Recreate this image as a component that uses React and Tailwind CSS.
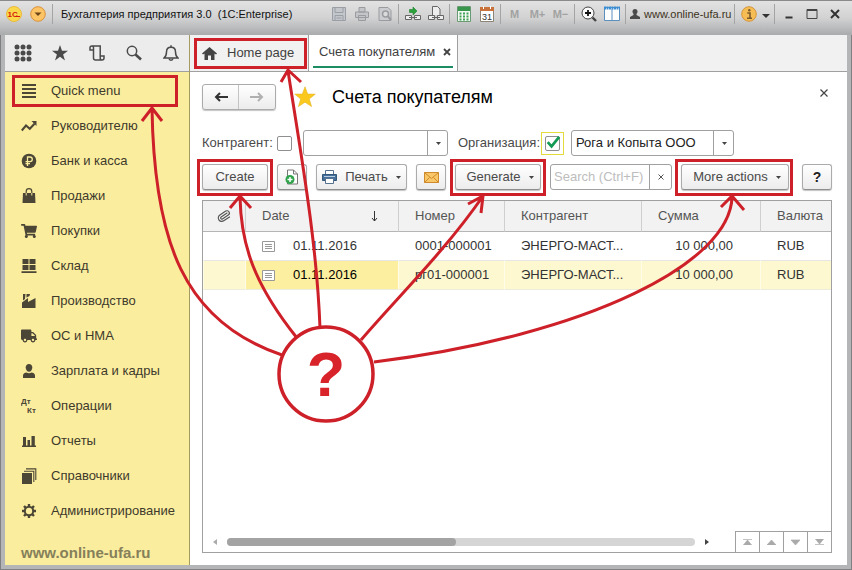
import { useState } from "react";
import { FaTruck, FaShoppingCart } from "react-icons/fa";
import { Paperclip } from "lucide-react";

const ICON = "w-4 h-4 shrink-0";

// Sidebar icons
const BarsIcon = () => (
  <svg className={ICON} viewBox="0 0 16 16" stroke="currentColor" strokeWidth="2">
    <path d="M1 2h14M1 6h14M1 10h14M1 14h14" />
  </svg>
);

const TrendIcon = () => (
  <svg className={ICON} viewBox="0 0 16 16" fill="none" stroke="currentColor" strokeWidth="2">
    <path d="M.8 12.5 5 7.5l3.8 3.3 4.7-5" />
    <path d="M10.5 3H15.500v5z" fill="currentColor" stroke="none" />
  </svg>
);

const RubleIcon = () => (
  <svg className={ICON} viewBox="0 0 16 16">
    <circle cx="8" cy="8" r="7.300" fill="currentColor" />
    <path d="M6.500 13V4h2.500a2.300 2.300 0 0 1 0 4.600H4.500M4.500 10.700h4.500" fill="none" stroke="#fbed9e" strokeWidth="1.300" />
  </svg>
);

const BagIcon = () => (
  <svg className={ICON} viewBox="0 0 16 16">
    <path d="M2 5h12l.5 10h-13z" fill="currentColor" />
    <path d="M5.200 8V3.500a2.800 2.800 0 0 1 5.600 0V8" fill="none" stroke="currentColor" strokeWidth="1.200" />
    <path d="M5.200 5v2.500M10.800 5v2.500" stroke="#fbed9e" strokeWidth="1" />
  </svg>
);

const StockIcon = () => (
  <svg className={ICON} viewBox="0 0 16 16" fill="currentColor">
    <path d="M1.500 1h6v5h-6zM8.500 1h6v5h-6zM1.500 7h6v5h-6zM8.500 7h6v5h-6zM.5 13.300h15V15H.5z" />
  </svg>
);

const FactoryIcon = () => (
  <svg className={ICON} viewBox="0 0 16 16" fill="currentColor">
    <path d="M1 15V9.500L7 5v4l7.500-4v10z" />
    <path d="M2 1h2.500L4 6 2 7.500zM5.500 1H9L8.500 3 5.500 4.500z" />
  </svg>
);

const PersonIcon = () => (
  <svg className={ICON} viewBox="0 0 16 16" fill="currentColor">
    <path d="M8 1c2 0 3.300 1.400 3.300 3.500S9.800 8.800 8 8.800 4.700 6.600 4.700 4.500 6 1 8 1z" />
    <path d="M2 15v-2.500C2 10.500 4 9.800 5.500 9.500 7 10.500 9 10.500 10.500 9.500 12 9.800 14 10.500 14 12.500V15z" />
  </svg>
);

const DebitIcon = () => (
  <svg className={ICON} viewBox="0 0 16 16" fill="currentColor" fontSize="8" fontWeight="bold">
    <text x="0" y="6">Дт</text>
    <text x="6" y="15">Кт</text>
  </svg>
);

const ReportsIcon = () => (
  <svg className={ICON} viewBox="0 0 16 16" fill="currentColor">
    <path d="M1 12.500h14V14H1zM2 4h3v9H2zM6.500 7h2.500v6H6.500zM10.500 3h3.300v10h-3.300z" />
  </svg>
);

const BooksIcon = () => (
  <svg className={ICON} viewBox="0 0 16 16">
    <path d="M1 5h10v11H1z" fill="currentColor" />
    <path d="M3 3.200h9.800V14M5 .9h9.800V12" fill="none" stroke="currentColor" strokeWidth="1.100" />
  </svg>
);

const GearIcon = () => (
  <svg className={ICON} viewBox="0 0 16 16" fill="none" stroke="currentColor">
    <circle cx="8" cy="8" r="4.200" strokeWidth="2" />
    <path
      d="M8 1v2.500M8 12.500V15M1 8h2.500M12.500 8H15M3 3l1.800 1.800M11.200 11.200 13 13M13 3l-1.800 1.800M4.800 11.200 3 13"
      strokeWidth="2.400"
    />
  </svg>
);

const sections = [
  { label: "Quick menu", icon: <BarsIcon /> },
  { label: "Руководителю", icon: <TrendIcon /> },
  { label: "Банк и касса", icon: <RubleIcon /> },
  { label: "Продажи", icon: <BagIcon /> },
  { label: "Покупки", icon: <FaShoppingCart className={ICON} /> },
  { label: "Склад", icon: <StockIcon /> },
  { label: "Производство", icon: <FactoryIcon /> },
  { label: "ОС и НМА", icon: <FaTruck className={ICON} /> },
  { label: "Зарплата и кадры", icon: <PersonIcon /> },
  { label: "Операции", icon: <DebitIcon /> },
  { label: "Отчеты", icon: <ReportsIcon /> },
  { label: "Справочники", icon: <BooksIcon /> },
  { label: "Администрирование", icon: <GearIcon /> },
];

const invoices = [
  { date: "01.11.2016", number: "0001-000001", partner: "ЭНЕРГО-МАСТ...", sum: "10 000,00", currency: "RUB" },
  { date: "01.11.2016", number: "рг01-000001", partner: "ЭНЕРГО-МАСТ...", sum: "10 000,00", currency: "RUB" },
];

function Caret() {
  return (
    <svg className="w-[5px] h-[3px] shrink-0" viewBox="0 0 5 3" fill="#444">
      <path d="M0 0h5L2.500 3z" />
    </svg>
  );
}

function TitleButton({ label, children }) {
  return (
    <button aria-label={label} className="w-[23px] h-6 flex items-center justify-center shrink-0">
      {children}
    </button>
  );
}

function Divider() {
  return <span className="w-px h-5 mx-0.5 bg-[#a4a4a4] shrink-0" />;
}

function TitleBar() {
  return (
    <header className="h-[35px] pb-2 pl-1.5 pr-1.5 flex items-center bg-linear-to-b from-[#e2e2e2] via-[#d2d2d3] to-[#a9abac] border-t border-[#8a8a8c] text-[11px] text-[#111]">
      <svg className="w-4 h-4 shrink-0" viewBox="0 0 16 16">
        <circle cx="8" cy="8" r="7.500" fill="#fbd84a" stroke="#e9b93e" />
        <text x="1.500" y="11" fontSize="8" fontWeight="bold" fill="#d4200c">1C</text>
        <path d="M9 10.500h5" stroke="#d4200c" />
      </svg>
      <button aria-label="Main menu" className="ml-2 shrink-0">
        <svg className="w-4 h-4" viewBox="0 0 16 16">
          <circle cx="8" cy="8" r="7.300" fill="#fcc465" stroke="#d9913a" />
          <path d="M4.500 6.500h7L8 10z" fill="#6b4517" />
        </svg>
      </button>
      <span className="w-px h-5 mx-1.5 bg-[#a4a4a4] shrink-0" />
      <h1 className="pl-0.5 whitespace-nowrap">Бухгалтерия предприятия 3.0 &nbsp;(1C:Enterprise)</h1>
      <div className="ml-auto flex items-center">
        <TitleButton label="Save">
          <svg className="w-3.5 h-3.5" viewBox="0 0 14 14" fill="#c3c6cb" stroke="#9a9ea5">
            <path d="M.5.5h13v13H.5zM3 .5h8v5H3zM3 8.500h8v5H3z" />
            <path d="M4.500 11h5" />
          </svg>
        </TitleButton>
        <TitleButton label="Print">
          <svg className="w-3.5 h-3.5" viewBox="0 0 14 14" fill="#c3c5c8" stroke="#999b9f">
            <path d="M4 .5h6V5H4zM.5 5h13v5.500H.5zM3.500 8.500h7v5h-7z" />
          </svg>
        </TitleButton>
        <TitleButton label="Preview">
          <svg className="w-3.5 h-3.5" viewBox="0 0 14 14" fill="#cbcccf" stroke="#999b9f">
            <path d="M1 .5h9l3 3v10H1z" />
            <circle cx="7.500" cy="7" r="3" fill="#d9dadc" strokeWidth="1.500" />
            <path d="m10 9.500 3 3.500" strokeWidth="2" />
          </svg>
        </TitleButton>
        <Divider />
        <TitleButton label="Get link">
          <svg className="w-4 h-4" viewBox="0 0 16 16" fill="#eee" stroke="#666">
            <path d="M.5 9.500h6v4h-6zM9.500 9.500h6v4h-6z" />
            <path d="M4 11.500h8" />
            <path d="M4.500 3.500H8V1l4 4-4 4V6.500H4.500z" fill="#2ca13b" stroke="#1d7f2b" strokeWidth=".6" />
          </svg>
        </TitleButton>
        <TitleButton label="Go to link">
          <svg className="w-4 h-4" viewBox="0 0 16 16" fill="#eee" stroke="#666">
            <path d="M4.500 9V.5h5l2.500 2.500v6" />
            <path d="M.5 9.500h6v4h-6zM9.500 9.500h6v4h-6z" />
            <path d="M4 11.500h8" />
          </svg>
        </TitleButton>
        <Divider />
        <TitleButton label="Calculator">
          <svg className="w-3.5 h-4" viewBox="0 0 14 16">
            <path d="M.5.5h13v15H.5z" fill="#f4fbf4" stroke="#6a9a72" />
            <path d="M1 1h12v4H1z" fill="#37964b" />
            <path d="M2.500 7.500h9M2.500 10.500h9M2.500 13.500h9" stroke="#43a058" strokeWidth="2" strokeDasharray="2 1.500" />
          </svg>
        </TitleButton>
        <TitleButton label="Calendar">
          <svg className="w-3.5 h-4" viewBox="0 0 14 16">
            <path d="M.5 1.500h13v14H.5z" fill="#fff" stroke="#8d8478" />
            <path d="M0 1h14v4H0z" fill="#c9713a" />
            <path d="M3.500 0v3M10.500 0v3" stroke="#fff" />
            <text x="2" y="13.500" fontSize="9" fill="#333">31</text>
          </svg>
        </TitleButton>
        <Divider />
        {["M", "M+", "M−"].map((m) => (
          <button key={m} className="w-[23px] h-6 text-[11px] font-bold text-[#a2a2a2]">
            {m}
          </button>
        ))}
        <Divider />
        <TitleButton label="Zoom">
          <svg className="w-4 h-4" viewBox="0 0 16 16" fill="none" stroke="#444">
            <circle cx="7" cy="7" r="6" fill="#fafafa" />
            <path d="M7 4v6M4 7h6" stroke="#111" strokeWidth="1.800" />
            <path d="m11.500 11.500 3.500 3.500" strokeWidth="2.400" />
          </svg>
        </TitleButton>
        <TitleButton label="Panels">
          <svg className="w-4 h-4" viewBox="0 0 16 16">
            <path d="M.5 1.500h15v13H.5zM8 3v11" fill="#fff" stroke="#5b8fbe" />
            <path d="M0 2h16" stroke="#3c8ed4" strokeWidth="3" strokeDasharray="2 .5" />
          </svg>
        </TitleButton>
        <Divider />
        <a href="#user" className="w-[104px] pl-0.5 flex items-center gap-1 text-[11px] text-[#3c3320] whitespace-nowrap">
          <svg className="w-2.5 h-2.5 shrink-0" viewBox="0 0 10 10" fill="#4b4b4b">
            <circle cx="5" cy="2.500" r="2.500" />
            <path d="M3.500 4h3v2L10 8v2H0V8l3.500-2z" />
          </svg>
          www.online-ufa.ru
        </a>
        <Divider />
        <TitleButton label="Information">
          <svg className="w-4 h-4" viewBox="0 0 16 16">
            <circle cx="8" cy="8" r="7.300" fill="#f7bd55" stroke="#d4953a" />
            <path d="M6.300 7H9v5M6 12.300h5" fill="none" stroke="#7b5a2c" strokeWidth="1.600" />
            <circle cx="8.300" cy="4.300" r="1.200" fill="#7b5a2c" />
          </svg>
        </TitleButton>
        <button aria-label="More" className="w-3 h-6 pt-1 flex items-center justify-center">
          <svg className="w-2 h-1" viewBox="0 0 8 4" fill="#333">
            <path d="M0 0h8L4 4z" />
          </svg>
        </button>
        <Divider />
        <TitleButton label="Minimize">
          <svg className="w-3 h-3" viewBox="0 0 12 12">
            <path d="M2.500 9.500h7" stroke="#333" strokeWidth="2" />
          </svg>
        </TitleButton>
        <TitleButton label="Maximize">
          <svg className="w-3 h-3" viewBox="0 0 12 12" fill="none" stroke="#444">
            <path d="M1 1.500h10v9H1zM1 2.500h10" />
          </svg>
        </TitleButton>
        <TitleButton label="Close">
          <svg className="w-3 h-3" viewBox="0 0 12 12" stroke="#333" strokeWidth="2">
            <path d="m2 2 8 8M10 2l-8 8" />
          </svg>
        </TitleButton>
      </div>
    </header>
  );
}

function ToolPanel() {
  return (
    <div className="h-[37px] grid grid-cols-5 place-items-center bg-[#ececec] border-b border-[#a0a0a0] text-[#4a4a4a]">
      <button aria-label="Sections">
        <svg className="w-[18px] h-[18px]" viewBox="0 0 18 18" fill="currentColor">
          {[3, 9, 15].map((y) => [3, 9, 15].map((x) => <circle key={`${x}-${y}`} cx={x} cy={y} r="2.500" />))}
        </svg>
      </button>
      <button aria-label="Favorites">
        <svg className="w-4 h-4" viewBox="0 0 16 16" fill="currentColor">
          <path d="m8 0 2 5.800h6l-4.900 3.600 1.900 6L8 11.800 3 15.400l1.900-6L0 5.800h6z" />
        </svg>
      </button>
      <button aria-label="History">
        <svg className="w-4 h-4" viewBox="0 0 16 16" fill="none" stroke="currentColor" strokeWidth="1.500">
          <path d="M4.500 5H1V2.800C1 1.500 1.800 1 2.800 1h8.400v10.500M4.500 12V2.500C4.500 1.500 3.800 1 2.800 1M11.200 11H15v2c0 1.300-.8 2-2 2H6.500c-1.300 0-2-.8-2-2v-2M11.200 11v2c0 1.200.6 2 1.800 2" />
        </svg>
      </button>
      <button aria-label="Search">
        <svg className="w-4 h-4" viewBox="0 0 16 16" fill="none" stroke="currentColor">
          <circle cx="6" cy="6" r="4.700" strokeWidth="1.500" />
          <path d="m9.500 9.500 5.500 5" strokeWidth="2.600" />
        </svg>
      </button>
      <button aria-label="Notifications">
        <svg className="w-4 h-4" viewBox="0 0 16 16" fill="none" stroke="currentColor" strokeWidth="1.500">
          <path d="M1 13c2-1.500 2.500-3 2.500-6 0-3 2-4.700 4.500-4.700S12.500 4 12.500 7c0 3 .5 4.500 2.500 6z" />
          <path d="M8 2.300V.3M6 13.500c.3 2.200 3.700 2.200 4 0" />
        </svg>
      </button>
    </div>
  );
}

function Sidebar() {
  return (
    <aside className="w-[185px] shrink-0 flex flex-col border-r border-[#a39b62] bg-[#fbed9e]">
      <ToolPanel />
      <nav className="pt-px text-[13px] text-[#3e3a2c]">
        {sections.map((s) => (
          <a key={s.label} href="#section" className="h-[35px] pl-4 flex items-center gap-3.5 whitespace-nowrap">
            <span className="text-[#4b4636]">{s.icon}</span>
            {s.label}
          </a>
        ))}
      </nav>
      <p className="mt-auto pl-4 text-[15px] leading-6 font-bold text-[#85805a]">www.online-ufa.ru</p>
    </aside>
  );
}

function Tabs() {
  return (
    <div className="h-[37px] flex bg-[#f1f1f1] border-b border-[#a0a0a0] text-[13px] text-[#3f3f3f]">
      <button className="w-[119px] pl-3 flex items-center gap-2.5 border-r border-[#a0a0a0]">
        <svg className="w-[15px] h-[13px]" viewBox="0 0 15 13" fill="#444">
          <path d="M7.500 0 0 6.500l1 1L2.500 6.500V13H6V8.500h3V13h3.500V6.500L14 7.500l1-1z" />
        </svg>
        Home page
      </button>
      <div className="px-1 bg-white border-r border-[#a0a0a0] flex flex-col">
        <div className="flex-1 pl-1.5 pr-0.5 pt-0.5 flex items-center gap-2 border-b-2 border-[#1c8c62]">
          <button className="whitespace-nowrap">Счета покупателям</button>
          <button aria-label="Close tab">
            <svg className="w-2 h-2" viewBox="0 0 8 8" stroke="#444" strokeWidth="1.800">
              <path d="m1 1 6 6M7 1 1 7" />
            </svg>
          </button>
        </div>
        <span className="h-[3px]" />
      </div>
    </div>
  );
}

const BUTTON =
  "h-[26px] flex items-center justify-center shrink-0 whitespace-nowrap rounded-[3px] border border-[#ababab] border-b-[#8d8d8d] bg-linear-to-b from-white to-[#ececec] shadow-[0_1px_1px_#c4c4c4]";

function Combo({ id, options, className }) {
  return (
    <div className={`relative h-[26px] ${className}`}>
      <select
        id={id}
        className="w-full h-full pl-1 pr-6 appearance-none rounded-[3px] border border-[#a0a0a0] bg-white text-[13px] text-[#222]"
      >
        {options.map((o) => (
          <option key={o}>{o}</option>
        ))}
      </select>
      <span className="absolute right-0 inset-y-0 w-[21px] flex items-center justify-center border-l border-[#a0a0a0] pointer-events-none">
        <Caret />
      </span>
    </div>
  );
}

function Filters() {
  const [byOrg, setByOrg] = useState(true);

  return (
    <div className="mt-5 flex items-center">
      <label htmlFor="use-partner" className="w-[75px] whitespace-nowrap">Контрагент:</label>
      <input id="use-partner" type="checkbox" className="w-[15px] h-[15px] shrink-0 appearance-none rounded-[2px] border border-[#8f8f8f] bg-white" />
      <Combo id="partner" options={[""]} className="w-[145px] ml-[11px]" />
      <label htmlFor="use-org" className="w-[83px] ml-2.5 whitespace-nowrap">Организация:</label>
      <span className="relative w-[23px] h-[23px] shrink-0 flex items-center justify-center border border-[#e3da3c]">
        <input
          id="use-org"
          type="checkbox"
          checked={byOrg}
          onChange={(e) => setByOrg(e.target.checked)}
          className="w-[15px] h-[15px] appearance-none rounded-[2px] border border-[#8f8f8f] bg-white"
        />
        {byOrg && (
          <svg className="absolute inset-0 w-full h-full pointer-events-none" viewBox="0 0 22 22" fill="none" stroke="#139a55" strokeWidth="2.800">
            <path d="m6 9.500 4 4.500L18 4" />
          </svg>
        )}
      </span>
      <Combo id="organization" options={["Рога и Копыта ООО"]} className="w-[163px] ml-[7px]" />
    </div>
  );
}

function CommandBar() {
  return (
    <div className="mt-2 flex items-center gap-[9px]">
      <button className={`${BUTTON} w-[66px]`}>Create</button>
      <button aria-label="Copy" className={`${BUTTON} w-[30px]`}>
        <svg className="w-4 h-4" viewBox="0 0 16 16" fill="none">
          <path d="M3.500 1h6l4 4v10h-10z" fill="#fff" stroke="#777" />
          <path d="M9.500 1v4h4" stroke="#777" />
          <circle cx="6" cy="10.500" r="4.500" fill="#2fa24c" />
          <path d="M6 8v5M3.500 10.500h5" stroke="#fff" strokeWidth="1.500" />
        </svg>
      </button>
      <button className={`${BUTTON} w-[91px] gap-2`}>
        <svg className="w-[15px] h-[14px]" viewBox="0 0 15 14">
          <path d="M3.500.5h8V5h-8z" fill="#fff" stroke="#55718f" />
          <path d="M.5 4.500h14v6H.5z" fill="#456f9b" stroke="#34577c" />
          <path d="M3.500 8.500h8v5h-8z" fill="#fff" stroke="#55718f" />
          <path d="M2 6.500h11" stroke="#b7cbe0" />
        </svg>
        Печать
        <Caret />
      </button>
      <button aria-label="Send by email" className={`${BUTTON} w-[30px]`}>
        <svg className="w-[15px] h-[11px]" viewBox="0 0 15 11" stroke="#cf8a2c">
          <path d="M.5.5h14v10H.5z" fill="#f9c768" />
          <path d="m.5.500 7 6 7-6M.5 10.500l5-5M14.500 10.500l-5-5" fill="none" />
        </svg>
      </button>
      <button className={`${BUTTON} w-[86px] pl-1 gap-2`}>
        Generate
        <Caret />
      </button>
      <div className="w-[122px] h-[26px] shrink-0 flex rounded-[3px] border border-[#a0a0a0] bg-white">
        <input aria-label="Search" placeholder="Search (Ctrl+F)" className="flex-1 min-w-0 pl-[3px] outline-none placeholder-[#bdbdbd]" />
        <button aria-label="Clear" className="w-[22px] flex items-center justify-center border-l border-[#a0a0a0]">
          <svg className="w-1.5 h-1.5" viewBox="0 0 6 6" stroke="#555">
            <path d="m.5.500 5 5M5.500.500l-5 5" />
          </svg>
        </button>
      </div>
      <button className={`${BUTTON} w-[108px] pl-1 gap-2`}>
        More actions
        <Caret />
      </button>
      <button className={`${BUTTON} w-[30px] ml-auto font-bold text-sm text-[#222]`}>?</button>
    </div>
  );
}

function InvoiceTable() {
  const head = "h-[31px] pl-4 font-normal text-left border-l border-[#cfcfcf]";
  const cell = "h-[29px] pl-4 border-l";

  return (
    <div className="mt-2.5 flex-1 flex flex-col border border-[#a0a0a0] bg-white">
      <table className="w-full table-fixed border-separate border-spacing-0">
        <colgroup>
          <col className="w-[42px]" />
          <col className="w-[153px]" />
          <col className="w-[106px]" />
          <col className="w-[137px]" />
          <col className="w-[119px]" />
          <col />
        </colgroup>
        <thead className="bg-[#f2f2f2] text-[#555]">
          <tr>
            <th className="h-[31px] border-b border-[#b5b5b5]">
              <Paperclip aria-label="Attachments" className="w-3.5 h-3.5 mx-auto rotate-12" strokeWidth={2} />
            </th>
            <th className={`${head} border-b border-b-[#b5b5b5]`}>
              <span className="pr-5 flex items-center justify-between">
                Date
                <svg className="w-[7px] h-[11px]" viewBox="0 0 7 11" fill="none" stroke="#333">
                  <path d="M3.500 0v10M1 7l2.500 3L6 7" />
                </svg>
              </span>
            </th>
            {["Номер", "Контрагент", "Сумма", "Валюта"].map((h) => (
              <th key={h} className={`${head} border-b border-b-[#b5b5b5]`}>{h}</th>
            ))}
          </tr>
        </thead>
        <tbody className="text-[#333]">
          {invoices.map((row, i) => {
            const selected = i === 1;
            const tone = selected
              ? "bg-[#fdf8cf] border-l-[#fffce8] border-b border-b-[#ececdc]"
              : "border-l-transparent border-b border-b-[#e6e6e6]";
            return (
              <tr key={row.number}>
                <td className={`${cell} ${tone}`}></td>
                <td className={`${cell} ${selected ? "bg-[#fcef9f] text-black border-l-[#fffce8] border-b border-b-[#ececdc]" : tone}`}>
                  <span className="flex items-center gap-[18px]">
                    <svg className="w-[13px] h-[11px] shrink-0" viewBox="0 0 13 11" fill="none" stroke="#999">
                      <path d="M.5.500h12v10H.5z" fill="#fff" />
                      <path d="M3 3.500h7M3 5.500h7M3 7.500h7" />
                    </svg>
                    {row.date}
                  </span>
                </td>
                <td className={`${cell} ${tone}`}>{row.number}</td>
                <td className={`${cell} ${tone} whitespace-nowrap`}>{row.partner}</td>
                <td className={`${cell} ${tone} pr-[27px] text-right whitespace-nowrap`}>{row.sum}</td>
                <td className={`${cell} ${tone}`}>{row.currency}</td>
              </tr>
            );
          })}
        </tbody>
      </table>

      {/* Horizontal scroll and paging */}
      <div className="mt-auto flex items-center">
        <svg className="w-1 h-1.5 ml-2.5" viewBox="0 0 4 6" fill="#aaa">
          <path d="M4 0v6L0 3z" />
        </svg>
        <div className="flex-1 h-2 ml-2.5 mr-2.5 rounded-full bg-[#d5d5d5]">
          <div className="w-[49%] h-full rounded-full bg-[#a3a3a3]" />
        </div>
        <svg className="w-1 h-1.5 mr-[26px]" viewBox="0 0 4 6" fill="#444">
          <path d="M0 0v6l4-3z" />
        </svg>
        <div className="flex border-t border-[#a0a0a0]">
          {[
            ["First", "M0 .5h9M4.500 1 8.500 6h-8z"],
            ["Previous", "M4.500 1 9 6H0z"],
            ["Next", "M0 1h9L4.500 6z"],
            ["Last", "M.5 0h8l-4 5zM0 5.500h9"],
          ].map(([label, d]) => (
            <button key={label} aria-label={label} className="w-6 h-5 flex items-center justify-center border-l border-[#a0a0a0]">
              <svg className="w-[9px] h-1.5" viewBox="0 0 9 6" fill="#a9a9a9" stroke="#a9a9a9" strokeWidth=".7">
                <path d={d} />
              </svg>
            </button>
          ))}
        </div>
      </div>
    </div>
  );
}

// Red frames and arrows drawn over the window
function Annotations() {
  return (
    <svg className="absolute left-0 top-0 w-[852px] h-[570px] pointer-events-none" viewBox="0 0 852 570" fill="none" stroke="#ce2029" strokeWidth="3">
      <rect x="13.500" y="76.500" width="163" height="29" />
      <rect x="195.500" y="39.500" width="110" height="28" />
      <rect x="198.500" y="160.500" width="73" height="34" />
      <rect x="451.500" y="160.500" width="93" height="34" />
      <rect x="676.500" y="160.500" width="115" height="34" />
      <path d="M152 108C154 242 184 322 282 355M142 121l10-13 10 13" />
      <path d="M240 197C241 245 254 284 297 338M230 208l10-12 11 12" />
      <path d="M288 71C302 160 317 245 320 328M281 82l7-12 13 12" />
      <path d="M483 196C446 250 395 300 361 340M468 204l15-8-2 17" />
      <path d="M732 196C732 262 590 335 374 362M721 207l11-11 12 14" />
      <circle cx="326" cy="374" r="47" fill="#fff" strokeWidth="3.500" />
      <text x="326" y="396" textAnchor="middle" fontSize="63" fontWeight="bold" fill="#d8232a" stroke="none">?</text>
    </svg>
  );
}

export default function App() {
  return (
    <div className="relative min-h-screen flex flex-col bg-[#b3b5b6] shadow-[inset_0_0_0_1px_#808083] font-['Liberation_Sans',Arial,sans-serif]">
      <TitleBar />
      <div className="flex-1 flex mx-[5px] mb-[5px]">
        <Sidebar />
        <main className="flex-1 min-w-0 flex flex-col bg-white">
          <Tabs />
          <section className="flex-1 flex flex-col pl-3 pr-[15px] pt-3 pb-3 text-[13px] text-[#4a4a4a]">
            <div className="flex items-center">
              <div className="w-[74px] h-[26px] grid grid-cols-2 rounded-[3px] border border-[#ababab] bg-linear-to-b from-white to-[#ececec] shadow-[0_1px_1px_#c4c4c4]">
                <button aria-label="Back" className="flex items-center justify-center border-r border-[#c4c4c4]">
                  <svg className="w-3.5 h-2.5" viewBox="0 0 14 10" fill="none" stroke="#333" strokeWidth="2">
                    <path d="M14 5H2M6 1 2 5l4 4" />
                  </svg>
                </button>
                <button aria-label="Forward" className="flex items-center justify-center">
                  <svg className="w-3.5 h-2.5" viewBox="0 0 14 10" fill="none" stroke="#b0b0b0" strokeWidth="2">
                    <path d="M0 5h12M8 1l4 4-4 4" />
                  </svg>
                </button>
              </div>
              <svg className="w-[22px] h-[22px] ml-[18px] shrink-0" viewBox="0 0 22 22" fill="#fbc91d" stroke="#e3b52c" strokeWidth=".6">
                <path d="m11 .8 2.700 7.300h7.600l-6 4.900 2.300 7.600L11 16.200l-6.600 4.400L6.700 13 .7 8.100h7.600z" />
              </svg>
              <h2 className="ml-4 text-lg leading-6 text-black">Счета покупателям</h2>
              <button aria-label="Close form" className="ml-auto mr-1 pb-2">
                <svg className="w-2 h-2" viewBox="0 0 8 8" stroke="#444" strokeWidth="1.200">
                  <path d="m.5.500 7 7M7.500.500l-7 7" />
                </svg>
              </button>
            </div>
            <Filters />
            <CommandBar />
            <InvoiceTable />
          </section>
        </main>
      </div>
      <Annotations />
    </div>
  );
}
